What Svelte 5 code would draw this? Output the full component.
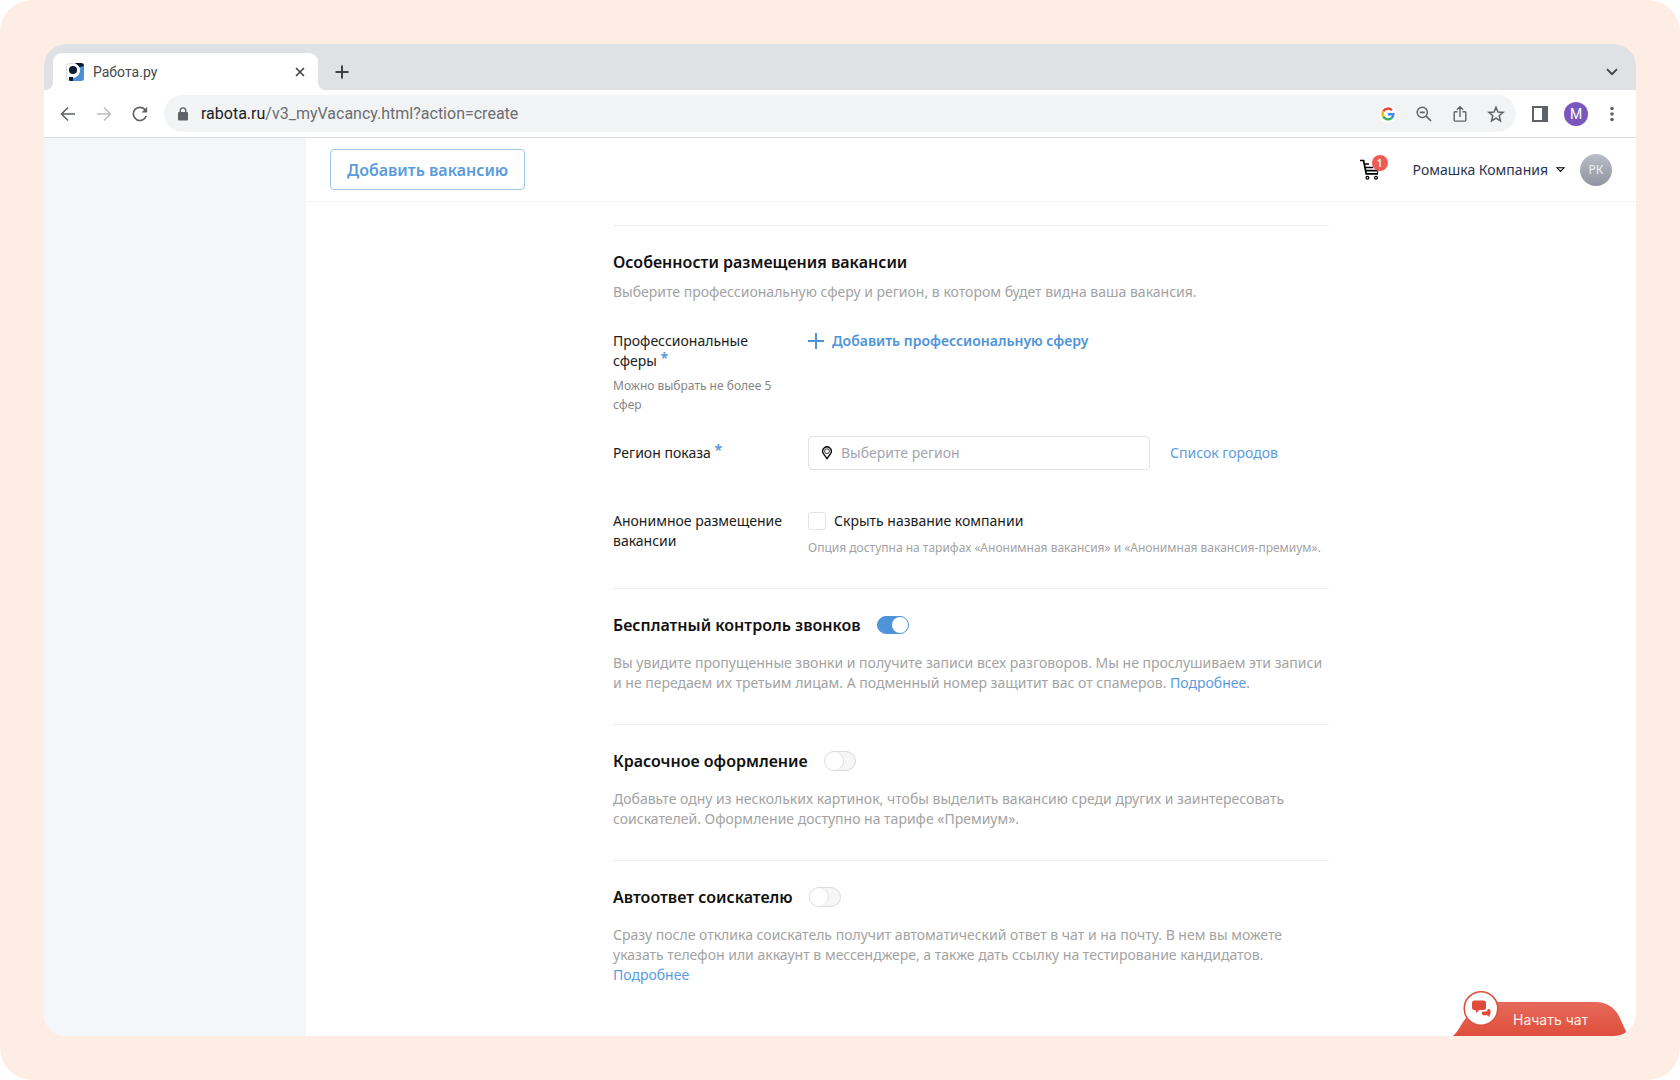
<script lang="ts">
    interface PromoSection {
        id: string;
        title: string;
        text: string;
        link?: string;
        tail?: string;
        enabled: boolean;
    }

    let region = $state("");
    let hideCompany = $state(false);

    let sections = $state<PromoSection[]>([
        {
            id: "calls",
            title: "Бесплатный контроль звонков",
            text: "Вы увидите пропущенные звонки и получите записи всех разговоров. Мы не прослушиваем эти записи и не передаем их третьим лицам. А подменный номер защитит вас от спамеров.",
            link: "Подробнее",
            tail: ".",
            enabled: true,
        },
        {
            id: "design",
            title: "Красочное оформление",
            text: "Добавьте одну из нескольких картинок, чтобы выделить вакансию среди других и заинтересовать соискателей. Оформление доступно на тарифе «Премиум».",
            enabled: false,
        },
        {
            id: "autoreply",
            title: "Автоответ соискателю",
            text: "Сразу после отклика соискатель получит автоматический ответ в чат и на почту. В нем вы можете указать телефон или аккаунт в мессенджере, а также дать ссылку на тестирование кандидатов.",
            link: "Подробнее",
            enabled: false,
        },
    ]);
</script>

<div class="frame">
    <div class="window">
        <div class="tabs">
            <div class="tab">
                <svg class="favicon" width="18" height="18" viewBox="0 0 18 18">
                    <rect x="0.5" y="0.5" width="17" height="17" rx="3" fill="#fff" stroke="#d5dae0" />
                    <path d="M9 0h6a3 3 0 0 1 3 3v2h-4z" fill="#0b1a33" />
                    <path d="M14 4l4-1v12a3 3 0 0 1-3 3H6v-3c6 0 9-5 8-11z" fill="#4a90d6" />
                    <circle cx="7.5" cy="7" r="6.4" fill="#fff" />
                    <circle cx="7" cy="7" r="4" fill="#0b1a33" />
                    <path d="M3 14h4v4H4.5Q3 18 3 16.5z" fill="#0b1a33" />
                </svg>
                <span class="tab-title">Работа.ру</span>
                <button class="icon-btn" aria-label="Закрыть вкладку">
                    <svg width="10" height="10" viewBox="0 0 10 10">
                        <path d="M1 1l8 8M9 1l-8 8" stroke="#3c4043" stroke-width="1.6" />
                    </svg>
                </button>
            </div>
            <button class="icon-btn new-tab" aria-label="Новая вкладка">
                <svg width="14" height="14" viewBox="0 0 14 14">
                    <path d="M7 0.5v13M0.5 7h13" stroke="#3c4043" stroke-width="2" />
                </svg>
            </button>
            <button class="icon-btn tab-list" aria-label="Список вкладок">
                <svg width="12" height="8" viewBox="0 0 12 8">
                    <path d="M1 1.2l5 5 5-5" fill="none" stroke="#3c4043" stroke-width="1.8" />
                </svg>
            </button>
        </div>

        <div class="toolbar">
            <button class="icon-btn" aria-label="Назад">
                <svg width="16" height="16" viewBox="0 0 16 16">
                    <path d="M15 8H2M8 1.5L1.5 8 8 14.5" fill="none" stroke="#5f6368" stroke-width="1.6" />
                </svg>
            </button>
            <button class="icon-btn" aria-label="Вперёд">
                <svg width="16" height="16" viewBox="0 0 16 16">
                    <path d="M1 8h13M8 1.5L14.5 8 8 14.5" fill="none" stroke="#bbbdc0" stroke-width="1.6" />
                </svg>
            </button>
            <button class="icon-btn" aria-label="Обновить">
                <svg width="16" height="16" viewBox="0 0 16 16">
                    <path d="M14.2 10a6.6 6.6 0 1 1-1.4-6.6l1 1" fill="none" stroke="#5f6368" stroke-width="1.7" />
                    <path d="M15.2 0.8v5.6H9.6z" fill="#5f6368" />
                </svg>
            </button>
            <div class="address">
                <svg width="10" height="14" viewBox="0 0 10 14">
                    <rect y="5" width="10" height="8.4" rx="1" fill="#5f6368" />
                    <path d="M2.3 6V3.6a2.7 2.7 0 0 1 5.4 0V6" fill="none" stroke="#5f6368" stroke-width="1.4" />
                </svg>
                <span class="url"><b>rabota.ru</b>/v3_myVacancy.html?action=create</span>
                <button class="icon-btn" aria-label="Google">
                    <svg width="18" height="18" viewBox="0 0 18 18">
                        <circle cx="9" cy="9" r="9" fill="#fff" />
                        <g fill="none" stroke-width="2.4">
                            <path d="M4.2 6.3A5.4 5.4 0 0 1 12.9 5.3" stroke="#ea4335" />
                            <path d="M4.3 11.7A5.4 5.4 0 0 1 4.2 6.3" stroke="#fbbc05" />
                            <path d="M12.5 13.1a5.4 5.4 0 0 1-8.2-1.4" stroke="#34a853" />
                            <path d="M9 9.2h5.4a5.4 5.4 0 0 1-1.9 3.9" stroke="#4285f4" />
                        </g>
                    </svg>
                </button>
                <button class="icon-btn" aria-label="Масштаб">
                    <svg width="16" height="16" viewBox="0 0 16 16">
                        <circle cx="6.3" cy="6.3" r="5.1" fill="none" stroke="#5f6368" stroke-width="1.5" />
                        <path d="M3.8 6.3h5M10 10l5 5" stroke="#5f6368" stroke-width="1.7" />
                    </svg>
                </button>
                <button class="icon-btn" aria-label="Поделиться">
                    <svg width="14" height="18" viewBox="0 0 14 18">
                        <path d="M4.5 6.7H2.2Q1.2 6.7 1.2 7.7v7.4q0 1 1 1h9.6q1 0 1-1V7.7q0-1-1-1H9.5M7 12V2M3.9 4.8L7 1.7l3.1 3.1" fill="none" stroke="#5f6368" stroke-width="1.4" />
                    </svg>
                </button>
                <button class="icon-btn" aria-label="Добавить в закладки">
                    <svg width="18" height="18" viewBox="0 0 18 18">
                        <path d="M9 2.2l2 4.8 5.1.4-3.9 3.4 1.2 5L9 13.1l-4.4 2.7 1.2-5L1.9 7.4 7 7z" fill="none" stroke="#5f6368" stroke-width="1.5" />
                    </svg>
                </button>
            </div>
            <button class="icon-btn" aria-label="Боковая панель">
                <svg width="16" height="16" viewBox="0 0 16 16">
                    <path d="M1 1h14v14H1z" fill="none" stroke="#5f6368" stroke-width="2" />
                    <path d="M10 1h5v14h-5z" fill="#5f6368" />
                </svg>
            </button>
            <button class="icon-btn profile" aria-label="Профиль">М</button>
            <button class="icon-btn" aria-label="Меню">
                <svg width="4" height="16" viewBox="0 0 4 16" fill="#5f6368">
                    <circle cx="2" cy="2.5" r="1.8" />
                    <circle cx="2" cy="8" r="1.8" />
                    <circle cx="2" cy="13.5" r="1.8" />
                </svg>
            </button>
        </div>

        <div class="page">
            <aside></aside>
            <div class="content">
                <header>
                    <button class="add-vacancy">Добавить вакансию</button>
                    <div class="account">
                        <a class="cart" href="#cart" aria-label="Корзина">
                            <svg width="20" height="22" viewBox="0 0 20 22">
                                <path d="M0 1.5h3.6l2.6 13.4H18M4.2 5H9M5 8.5h8M5.6 11.6h12.6" fill="none" stroke="#000" stroke-width="1.7" />
                                <path d="M17.6 12.5v2" stroke="#000" />
                                <circle cx="7.4" cy="18.8" r="1.4" fill="none" stroke="#000" stroke-width="1.2" />
                                <circle cx="16" cy="18.8" r="1.4" fill="none" stroke="#000" stroke-width="1.2" />
                            </svg>
                            <span class="badge">1</span>
                        </a>
                        <button class="company">
                            Ромашка Компания
                            <svg width="9" height="6" viewBox="0 0 9 6">
                                <path d="M1 0.8h7L4.5 4.4z" fill="#fff" stroke="#000" stroke-width="1.1" />
                            </svg>
                        </button>
                        <span class="avatar">РК</span>
                    </div>
                </header>

                <main>
                    <section>
                        <h2>Особенности размещения вакансии</h2>
                        <p class="lead">Выберите профессиональную сферу и регион, в котором будет видна ваша вакансия.</p>

                        <div class="field spheres">
                            <div>
                                <div class="label">Профессиональные сферы <sup>*</sup></div>
                                <p class="hint dark">Можно выбрать не более 5 сфер</p>
                            </div>
                            <button class="add-sphere">
                                <svg width="16" height="16" viewBox="0 0 16 16">
                                    <path d="M8 0v16M0 8h16" stroke="#4f94d8" stroke-width="2" />
                                </svg>
                                Добавить профессиональную сферу
                            </button>
                        </div>

                        <div class="field region">
                            <label class="label" for="region">Регион показа <sup>*</sup></label>
                            <div class="region-row">
                                <div class="region-input">
                                    <svg width="10" height="14" viewBox="0 0 10 14">
                                        <path d="M5 12.6L1.4 7.6a4.3 4.3 0 1 1 7.2 0z" fill="none" stroke="#000" stroke-width="1.3" />
                                        <circle cx="5" cy="5.2" r="2.4" fill="none" stroke="#000" stroke-width="0.8" />
                                    </svg>
                                    <input id="region" type="text" placeholder="Выберите регион" bind:value={region} />
                                </div>
                                <a href="#cities">Список городов</a>
                            </div>
                        </div>

                        <div class="field">
                            <div class="label">Анонимное размещение вакансии</div>
                            <div>
                                <label class="check">
                                    <input type="checkbox" bind:checked={hideCompany} />
                                    Скрыть название компании
                                </label>
                                <p class="hint">Опция доступна на тарифах «Анонимная вакансия» и «Анонимная вакансия-премиум».</p>
                            </div>
                        </div>
                    </section>

                    {#each sections as section (section.id)}
                        <section>
                            <div class="title-row">
                                <h2 id={section.id}>{section.title}</h2>
                                <input class="toggle" type="checkbox" role="switch" aria-labelledby={section.id} bind:checked={section.enabled} />
                            </div>
                            <p class="text">
                                {section.text}
                                {#if section.link}<a href="#more">{section.link}</a>{section.tail ?? ""}{/if}
                            </p>
                        </section>
                    {/each}
                </main>
            </div>
        </div>

        <button class="chat">
            <svg class="chat-shape" width="175" height="46" viewBox="0 0 175 46">
                <defs>
                    <linearGradient id="chat-fill" x1="0" y1="0" x2="0" y2="1">
                        <stop offset="0" stop-color="#e66a5a" />
                        <stop offset="1" stop-color="#de4f3c" />
                    </linearGradient>
                </defs>
                <path d="M0 46C5 42 8 34 13 28C17 18 20 12 30 12H143C153 12 161 17 166 26L175 46Z" fill="url(#chat-fill)" />
                <circle cx="28" cy="18.5" r="16.8" fill="#fff" stroke="#dc4f3c" stroke-width="1.5" />
                <rect x="19" y="10.5" width="14" height="9.5" rx="2.5" fill="#de4b39" />
                <path d="M22 19h5l-3.5 4z" fill="#de4b39" />
                <path d="M29 21.6h3.6q2.2 0 2.2-2.6h.8q2 0 2 2v1.6q0 2-1 2.3v2L34 25.2h-3.4q-2 0-1.6-3.6z" fill="#de4b39" />
            </svg>
            <span>Начать чат</span>
        </button>
    </div>
</div>

<style>
    :global(body) {
        margin: 0;
        background: #fff;
    }

    .frame {
        box-sizing: border-box;
        display: flex;
        min-height: 100vh;
        padding: 44px;
        border-radius: 32px;
        background: #feede5;
        font-family: "Noto Sans", "Open Sans", sans-serif;
        font-size: 14px;
        line-height: 20px;
        color: #1b1b1b;
    }

    .window {
        position: relative;
        flex: 1;
        display: flex;
        flex-direction: column;
        overflow: hidden;
        border-radius: 22px;
        background: #fff;
    }

    button {
        padding: 0;
        border: none;
        background: none;
        font: inherit;
        color: inherit;
        cursor: pointer;
    }

    a {
        color: #5b9bdd;
        text-decoration: none;
    }

    h2,
    p {
        margin: 0;
    }

    svg {
        display: block;
        flex: none;
    }

    .icon-btn {
        display: flex;
        flex: none;
        align-items: center;
        justify-content: center;
        width: 24px;
        height: 24px;
    }

    /* Browser chrome */
    .tabs {
        display: flex;
        align-items: flex-end;
        height: 46px;
        padding: 0 12px 0 9px;
        background: #dfe1e5;
        font-family: Roboto, sans-serif;
    }

    .tab {
        position: relative;
        display: flex;
        align-items: center;
        box-sizing: border-box;
        width: 265px;
        height: 37px;
        padding: 0 6px 0 13px;
        border-radius: 9px 9px 0 0;
        background: #fff;
    }

    /* outward curves at the foot of the active tab */
    .tab::before,
    .tab::after {
        content: "";
        position: absolute;
        bottom: 0;
        width: 8px;
        height: 8px;
    }

    .tab::before {
        right: 100%;
        background: radial-gradient(circle at 0 0, transparent 8px, #fff 8px);
    }

    .tab::after {
        left: 100%;
        background: radial-gradient(circle at 100% 0, transparent 8px, #fff 8px);
    }

    .tab-title {
        flex: 1;
        margin-left: 9px;
        color: #45484c;
    }

    .new-tab {
        margin: 0 0 6px 12px;
    }

    .tab-list {
        margin: 0 0 6px auto;
    }

    .toolbar {
        display: flex;
        align-items: center;
        gap: 12px;
        height: 47px;
        padding: 0 12px;
        border-bottom: 1px solid #dadce0;
        font-family: Roboto, sans-serif;
    }

    .address {
        flex: 1;
        display: flex;
        align-items: center;
        gap: 12px;
        height: 37px;
        padding: 0 8px 0 14px;
        border-radius: 19px;
        background: #f1f3f4;
    }

    .url {
        flex: 1;
        margin-left: 1px;
        font-size: 16px;
        color: #6b6e72;
    }

    .url b {
        font-weight: 400;
        color: #202124;
    }

    .profile {
        border-radius: 50%;
        background: #7a57bd;
        color: #fff;
    }

    /* Site */
    .page {
        flex: 1;
        display: flex;
    }

    aside {
        flex: none;
        width: 262px;
        background: #f4f6fa;
    }

    .content {
        flex: 1;
        min-width: 0;
    }

    header {
        display: flex;
        align-items: center;
        justify-content: space-between;
        height: 63px;
        padding: 0 24px;
        border-bottom: 1px solid #f5f5f5;
    }

    .add-vacancy {
        height: 41px;
        padding: 0 16px;
        border: 1px solid #9cc5ee;
        border-radius: 4px;
        color: #5b9bdd;
        font-size: 16px;
        font-weight: 600;
    }

    .account {
        display: flex;
        align-items: center;
    }

    .cart {
        position: relative;
        margin-right: 33px;
    }

    .badge {
        position: absolute;
        top: -4px;
        left: 12px;
        width: 16px;
        border-radius: 8px;
        background: #ef5a54;
        color: #fff;
        font-size: 10px;
        font-weight: 600;
        line-height: 16px;
        text-align: center;
    }

    .company {
        display: flex;
        align-items: center;
        gap: 8px;
        margin-right: 15px;
        color: #2a3550;
    }

    .avatar {
        width: 32px;
        border-radius: 50%;
        background: linear-gradient(#b9bdc6, #9094a0);
        color: #eceef2;
        font-size: 12px;
        line-height: 32px;
        text-align: center;
    }

    main {
        max-width: 716px;
        margin: 23px auto 0;
    }

    section {
        padding: 24px 0 31px;
        border-top: 1px solid #ededed;
    }

    h2 {
        font-size: 16px;
        font-weight: 600;
        line-height: 24px;
        color: #111;
    }

    .lead {
        margin: 8px 0 29px;
        color: #a3a3a3;
    }

    .text {
        margin-top: 16px;
        color: #a3a3a3;
    }

    .field {
        display: grid;
        grid-template-columns: 175px 1fr;
        column-gap: 20px;
        align-items: start;
    }

    .spheres {
        margin-bottom: 22px;
    }

    .region {
        align-items: center;
        margin-bottom: 41px;
    }

    sup {
        font-size: 14px;
        font-weight: 700;
        line-height: 0;
        vertical-align: 3px;
        color: #5b9bdd;
    }

    .hint {
        margin-top: 8px;
        font-size: 12px;
        line-height: 18px;
        color: #a3a3a3;
    }

    .hint.dark {
        margin-top: 5px;
        line-height: 19px;
        color: #858585;
    }

    .add-sphere {
        display: flex;
        align-items: center;
        gap: 8px;
        color: #4f94d8;
        font-weight: 600;
    }

    .region-row {
        display: flex;
        align-items: center;
        gap: 20px;
    }

    .region-input {
        display: flex;
        align-items: center;
        gap: 9px;
        box-sizing: border-box;
        width: 342px;
        height: 34px;
        padding: 0 13px;
        border: 1px solid #e3e3e3;
        border-radius: 4px;
    }

    .region-input input {
        flex: 1;
        min-width: 0;
        padding: 0;
        border: none;
        outline: none;
        background: none;
        font: inherit;
        color: inherit;
    }

    .region-input input::placeholder {
        color: #a3a5b0;
        opacity: 1;
    }

    .check {
        display: flex;
        align-items: center;
        gap: 8px;
    }

    .check input {
        appearance: none;
        box-sizing: border-box;
        width: 18px;
        height: 18px;
        margin: 0;
        border: 1px solid #e3e3e3;
        border-radius: 3px;
        background: #fff;
    }

    .check input:checked {
        border-color: #4f94d8;
        background: #4f94d8;
    }

    .title-row {
        display: flex;
        align-items: center;
        gap: 16px;
    }

    .toggle {
        appearance: none;
        display: flex;
        box-sizing: border-box;
        width: 32px;
        height: 20px;
        margin: 0;
        border: 1px solid #dcdcdc;
        border-radius: 10px;
        background: #f6f6f6;
        cursor: pointer;
    }

    .toggle::before {
        content: "";
        width: 18px;
        height: 18px;
        border-radius: 50%;
        background: #fff;
        box-shadow: 1px 0 0 #e0e0e0;
    }

    .toggle:checked {
        justify-content: flex-end;
        height: 18px;
        border-color: #4f94d8;
        background: #4f94d8;
    }

    .toggle:checked::before {
        width: 16px;
        height: 16px;
        box-shadow: none;
    }

    /* Chat launcher pinned to the window corner */
    .chat {
        position: absolute;
        right: 8px;
        bottom: 0;
        display: grid;
        color: #fdeeea;
        font-family: Inter, sans-serif;
        font-size: 14px;
    }

    .chat-shape,
    .chat span {
        grid-area: 1 / 1;
    }

    .chat span {
        padding: 20px 0 0 60px;
        text-align: left;
    }
</style>
